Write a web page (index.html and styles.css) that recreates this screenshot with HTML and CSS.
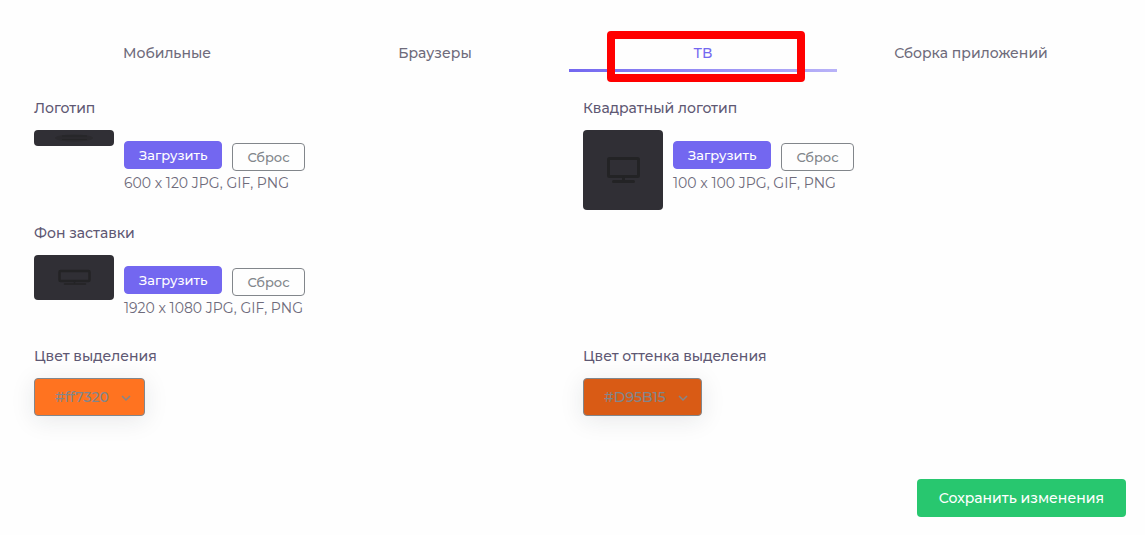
FILE: index.html
```html
<!DOCTYPE html>
<html lang="ru">
<head>
    <meta charset="UTF-8">
    <meta name="viewport" content="width=device-width, initial-scale=1.0">
    <title>ТВ</title>
    <link rel="stylesheet" href="styles.css">
</head>
<body>

    <nav class="tabs">
        <a class="tab" href="#mobile">Мобильные</a>
        <a class="tab" href="#browsers">Браузеры</a>
        <a class="tab active" href="#tv">ТВ<span class="marker"></span></a>
        <a class="tab" href="#build">Сборка приложений</a>
    </nav>

    <form class="settings">
        <div class="row">
            <div class="field">
                <div class="field-label">Логотип</div>
                <div class="media">
                    <svg class="thumb" viewBox="0 0 80 16">
                        <rect width="80" height="16" fill="#302f35"/>
                        <ellipse cx="40" cy="8" rx="19" ry="3.5" fill="#2b2a2e"/>
                        <path d="M28 6h25M28 9.500h25" stroke="#252527" stroke-width="1"/>
                    </svg>
                    <div class="controls">
                        <div class="buttons">
                            <button type="button" class="btn btn-primary">Загрузить</button>
                            <button type="button" class="btn btn-outline">Сброс</button>
                        </div>
                        <p class="hint">600 x 120 JPG, GIF, PNG</p>
                    </div>
                </div>
            </div>
            <div class="field">
                <div class="field-label">Квадратный логотип</div>
                <div class="media">
                    <svg class="thumb" viewBox="0 0 80 80">
                        <rect width="80" height="80" fill="#302f35"/>
                        <rect x="25.5" y="28.5" width="30" height="18" rx="1" fill="none" stroke="#232325" stroke-width="3"/>
                        <path d="M40.500 48v3M30.500 51.500h20" fill="none" stroke="#232325" stroke-width="3" stroke-linecap="round"/>
                    </svg>
                    <div class="controls">
                        <div class="buttons">
                            <button type="button" class="btn btn-primary">Загрузить</button>
                            <button type="button" class="btn btn-outline">Сброс</button>
                        </div>
                        <p class="hint">100 x 100 JPG, GIF, PNG</p>
                    </div>
                </div>
            </div>
        </div>

        <div class="row">
            <div class="field">
                <div class="field-label">Фон заставки</div>
                <div class="media">
                    <svg class="thumb" viewBox="0 0 80 45">
                        <rect width="80" height="45" fill="#302f35"/>
                        <rect x="25.500" y="16" width="30" height="10" rx="1" fill="none" stroke="#232325" stroke-width="2.500"/>
                        <path d="M40.500 26v2M30.500 29h21" fill="none" stroke="#232325" stroke-width="1.500" stroke-linecap="round"/>
                    </svg>
                    <div class="controls">
                        <div class="buttons">
                            <button type="button" class="btn btn-primary">Загрузить</button>
                            <button type="button" class="btn btn-outline">Сброс</button>
                        </div>
                        <p class="hint">1920 x 1080 JPG, GIF, PNG</p>
                    </div>
                </div>
            </div>
        </div>

        <div class="row">
            <div class="field">
                <label class="field-label" for="accent">Цвет выделения</label>
                <div class="picker">
                    <select id="accent" class="color accent">
                        <option>#ff7320</option>
                    </select>
                    <svg class="chevron" viewBox="0 0 12 12"><path d="M2 4l4 4 4-4" fill="none" stroke="#82868b" stroke-width="1.500"/></svg>
                </div>
            </div>
            <div class="field">
                <label class="field-label" for="tint">Цвет оттенка выделения</label>
                <div class="picker">
                    <select id="tint" class="color tint">
                        <option>#D95B15</option>
                    </select>
                    <svg class="chevron" viewBox="0 0 12 12"><path d="M2 4l4 4 4-4" fill="none" stroke="#82868b" stroke-width="1.500"/></svg>
                </div>
            </div>
        </div>

        <div class="actions">
            <button type="submit" class="btn-save">Сохранить изменения</button>
        </div>
    </form>

</body>
</html>
```

FILE: styles.css
```css
* {
    box-sizing: border-box;
}

body {
    margin: 0;
    padding: 34px 19px 18px 20px;
    background-color: #fefefe;
    color: #5e5873;
    font-family: Montserrat, Inter, sans-serif;
    font-size: 14px;
    font-weight: 500;
    line-height: 20px;
}

/* Tabs */
.tabs {
    display: flex;
    margin: 0 21px 26px 13px;
}

.tab {
    position: relative;
    flex: 1;
    padding: 9px 0;
    color: #6e6b7b;
    text-align: center;
    text-decoration: none;
}

.tab.active {
    color: #7367f0;
}

.tab.active::after {
    content: "";
    position: absolute;
    left: 0;
    right: 0;
    bottom: 0;
    height: 3px;
    background: linear-gradient(to right, #7367f0, #b9b3f8);
}

.marker {
    position: absolute;
    top: -3px;
    bottom: -10px;
    left: 38px;
    right: 32px;
    z-index: 1;
    border: 8px solid #ff0000;
    border-radius: 4px;
}

/* Settings */
.row {
    display: grid;
    grid-template-columns: 1fr 1fr;
    margin: 0 8px 13px 0;
}

.field {
    padding: 0 14px;
}

.field-label {
    display: block;
    margin-bottom: 12px;
}

.media {
    display: flex;
    align-items: flex-start;
    gap: 10px;
    min-height: 78px;
}

.thumb {
    width: 80px;
    border-radius: 4px;
}

.controls {
    padding-top: 11px;
}

.buttons {
    display: flex;
    align-items: flex-start;
    gap: 10px;
    margin-bottom: 2px;
}

.btn {
    height: 28px;
    padding: 0 14px;
    border: 1px solid;
    border-radius: 4px;
    font-family: inherit;
    font-size: 13px;
    font-weight: 500;
    cursor: pointer;
}

.btn-primary {
    border-color: #7367f0;
    background: #7367f0;
    color: #fff;
}

.btn-outline {
    margin-top: 2px;
    border-color: #82868b;
    background: transparent;
    color: #82868b;
}

.hint {
    margin: 0;
    color: #6e6b7b;
    font-weight: 400;
}

.picker {
    position: relative;
    display: inline-block;
    vertical-align: top;
}

.color {
    appearance: none;
    height: 38px;
    padding: 0 35px 0 20px;
    border: 1px solid #82868b;
    border-radius: 4px;
    box-shadow: 0 4px 24px rgba(34, 41, 47, 0.1);
    color: #82868b;
    font-family: inherit;
    font-size: 14px;
    font-weight: 500;
}

.accent {
    background: #ff7320;
}

.tint {
    background: #d95b15;
}

.chevron {
    position: absolute;
    top: 14px;
    right: 13px;
    width: 12px;
    pointer-events: none;
}

.actions {
    display: flex;
    justify-content: flex-end;
    margin-top: 63px;
}

.btn-save {
    height: 38px;
    padding: 0 22px;
    border: none;
    border-radius: 4px;
    background: #28c76f;
    color: #fff;
    font-family: inherit;
    font-size: 14px;
    font-weight: 500;
    cursor: pointer;
}
```
